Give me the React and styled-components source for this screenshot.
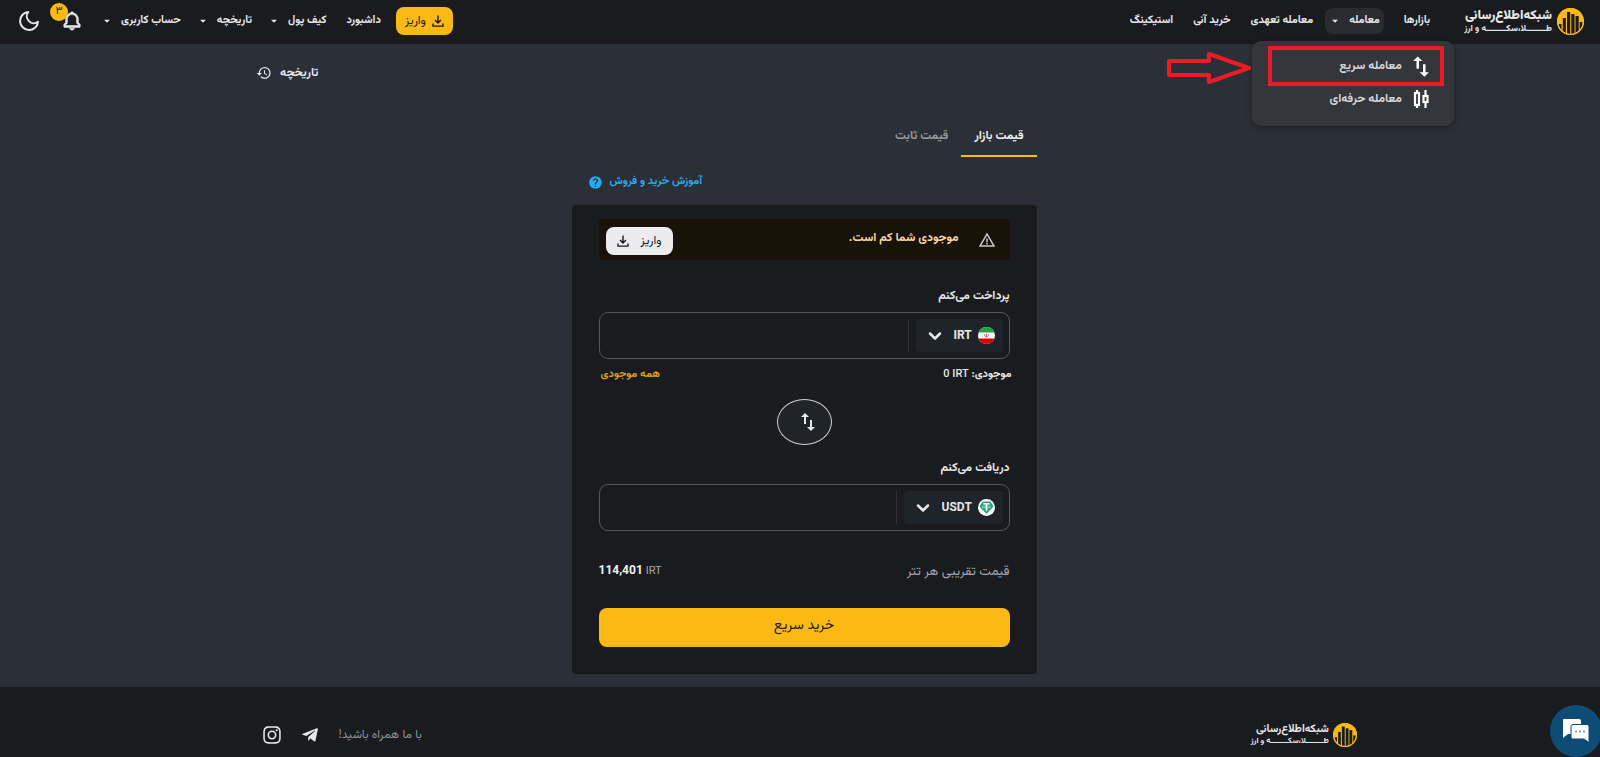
import React, {Component} from 'react';
import styled, {createGlobalStyle} from 'styled-components';
import {MdArrowDropDown, MdHelp, MdHistory, MdImportExport, MdWarningAmber} from 'react-icons/md';
import {BiBell} from 'react-icons/bi';
import {FiChevronDown, FiMoon} from 'react-icons/fi';
import {FaTelegramPlane, FaInstagram} from 'react-icons/fa';

const GlobalStyle = createGlobalStyle`
  * {
    box-sizing: border-box;
  }

  body {
    margin: 0;
    background-color: #2b2f37;
    color: #e6e7e9;
    font-family: Vazirmatn, Roboto, 'DejaVu Sans', sans-serif;
    font-size: 12px;
    line-height: 20px;
  }

  button, input, select {
    font: inherit;
    color: inherit;
    border: 0;
    margin: 0;
    padding: 0;
    background: none;
  }

  button {
    cursor: pointer;
  }

  a {
    color: inherit;
    text-decoration: none;
  }

  svg {
    display: block;
    flex-shrink: 0;
  }
`;

const Page = styled.div`
  min-height: 100vh;
  display: flex;
  flex-direction: column;
`;

const Header = styled.header`
  display: flex;
  justify-content: space-between;
  align-items: center;
  height: 44px;
  padding: 0 16px 2px 17px;
  background-color: #1a1b1f;
`;

const Nav = styled.nav`
  display: flex;
  align-items: center;
  gap: 20px;
  font-size: 11px;
  font-weight: 700;
`;

const Brand = styled.a`
  display: flex;
  align-items: center;
  gap: ${props => props.$small ? '4px' : '5px'};
  margin-left: ${props => props.$small ? '0' : '14px'};

  svg {
    width: ${props => props.$small ? '24px' : '27px'};
    height: ${props => props.$small ? '24px' : '27px'};
  }

  .names {
    display: flex;
    flex-direction: column;
    white-space: nowrap;
  }

  strong {
    font-size: ${props => props.$small ? '11px' : '13px'};
    line-height: ${props => props.$small ? '13px' : '16px'};
  }

  small {
    font-size: ${props => props.$small ? '8px' : '9px'};
    line-height: 11px;
    font-weight: 700;
  }
`;

const MenuWrapper = styled.div`
  position: relative;
  margin-left: -8px;
`;

const MenuButton = styled.button`
  display: flex;
  align-items: center;
  gap: 7px;
  height: 26px;
  padding: ${props => props.$active ? '0 4px 0 3px' : '0'};
  border-radius: 8px;
  background-color: ${props => props.$active ? '#292c31' : 'transparent'};
  white-space: nowrap;

  svg {
    margin-left: ${props => props.$active ? '0' : '-5px'};
  }
`;

const NavLink = styled.a`
  white-space: nowrap;
`;

const Dropdown = styled.ul`
  position: absolute;
  z-index: 2;
  top: 33px;
  right: -70px;
  width: 202px;
  margin: 0;
  padding: 5px 10px 14px 16px;
  list-style: none;
  border-radius: 9px;
  background-color: #35363b;
  box-shadow: 0 2px 6px rgba(0, 0, 0, .35);
  font-size: 12px;
`;

const DropdownItem = styled.li`
  border: 4px solid ${props => props.$marked ? '#ed1c24' : 'transparent'};

  a {
    display: flex;
    align-items: center;
    gap: 10px;
    height: ${props => props.$marked ? '32px' : '18px'};
    padding-right: 10px;
    color: #d6d7da;
  }
`;

const Pointer = styled.svg`
  position: absolute;
  z-index: 3;
  top: 43px;
  right: 132px;
  width: 86px;
  height: 34px;
`;

const HeaderTools = styled.div`
  display: flex;
  align-items: center;
  gap: 20px;

  ${Nav} {
    margin: 0 -5px 0 2px;
  }
`;

const DepositButton = styled.button`
  display: flex;
  justify-content: center;
  align-items: center;
  gap: ${props => props.$light ? '12px' : '6px'};
  height: 28px;
  width: ${props => props.$light ? '67px' : '57px'};
  border-radius: 8px;
  background-color: ${props => props.$light ? '#ececee' : '#fcb813'};
  color: #1a1b1f;
`;

const IconButton = styled.button`
  position: relative;
  display: flex;
`;

const Badge = styled.span`
  position: absolute;
  top: -7px;
  left: -11px;
  width: 18px;
  height: 18px;
  border-radius: 50%;
  background-color: #fcb813;
  color: #1a1b1f;
  font-size: 11px;
  font-weight: 400;
  line-height: 18px;
  text-align: center;
`;

const Main = styled.main`
  flex: 1;
  padding: 19px 15.5% 12px 16%;
`;

const HistoryLink = styled.a`
  display: flex;
  justify-content: flex-end;
  align-items: center;
  gap: 8px;
  font-weight: 700;
`;

const Exchange = styled.section`
  width: 100%;
  max-width: 465px;
  margin: 29px auto 0;
`;

const Tabs = styled.div`
  display: flex;
`;

const Tab = styled.button`
  height: 45px;
  padding: 4px 13px 0;
  border-bottom: 2px solid ${props => props.$active ? '#fcb813' : 'transparent'};
  color: ${props => props.$active ? '#f2f2f3' : '#96999f'};
  font-weight: 700;
`;

const HelpLink = styled.a`
  display: flex;
  justify-content: flex-end;
  align-items: center;
  gap: 7px;
  margin-top: 15px;
  padding-left: 16px;
  color: #29a9f0;
  font-size: 11px;
  font-weight: 700;
`;

const Card = styled.form`
  margin-top: 13px;
  padding: 14px 27px 27px;
  border-radius: 4px;
  background-color: #1a1b1f;
`;

const Alert = styled.div`
  display: flex;
  align-items: center;
  gap: 19px;
  height: 41px;
  padding: 0 14px 0 7px;
  border-radius: 4px;
  background-color: #191208;
  color: #f6d9a0;
  font-weight: 700;

  svg {
    color: #c9c9cc;
  }

  p {
    flex: 1;
    margin: 0;
    padding-bottom: 3px;
  }

  button {
    margin-top: 3px;
    color: #1a1b1f;
    font-weight: 400;
  }

  button svg {
    color: #1a1b1f;
  }
`;

const Label = styled.label`
  display: block;
  margin-top: ${props => props.$top};
  font-weight: 700;
`;

const AmountBox = styled.div`
  display: flex;
  align-items: center;
  height: 47px;
  margin-top: 6px;
  padding: 0 6px;
  border: 1px solid #55565b;
  border-radius: 9px;

  input {
    flex: 1;
    min-width: 0;
    height: 33px;
    padding: 0 12px;
    border-right: 1px solid #303136;
    outline: none;
  }
`;

const CoinPicker = styled.span`
  display: flex;
  align-items: center;
  gap: 5px;
  height: 33px;
  margin-left: 7px;
  padding: 0 8px 0 9px;
  border-radius: 4px;
  background-color: #1f242a;

  select {
    appearance: none;
    padding: 0;
    margin-left: 4px;
    outline: none;
    direction: ltr;
    font-weight: 700;
  }
`;

const BalanceRow = styled.div`
  display: flex;
  justify-content: space-between;
  margin: 6px -2px 0 2px;
  font-size: 11px;
  font-weight: 700;

  button {
    color: #dd9f14;
    font-weight: 700;
  }

  bdi {
    font-weight: 500;
  }
`;

const SwapButton = styled.button`
  display: flex;
  justify-content: center;
  align-items: center;
  width: 55px;
  height: 46px;
  margin: 14px auto 0;
  padding-left: 8px;
  border: 1px solid #d0d0d2;
  border-radius: 50%;
  background-color: #1f242a;
`;

const PriceRow = styled.div`
  display: flex;
  justify-content: space-between;
  align-items: center;
  margin-top: 30px;
  color: #a3a6b5;
  font-size: 13px;

  .price {
    direction: ltr;
    font-size: 11px;
  }

  strong {
    color: #f2f2f3;
    font-size: 12px;
  }
`;

const BuyButton = styled.button`
  width: 100%;
  height: 39px;
  margin-top: 26px;
  padding-bottom: 3px;
  border-radius: 8px;
  background-color: #fcb813;
  color: #1a1b1f;
  font-size: 14px;
`;

const Footer = styled.footer`
  display: flex;
  justify-content: space-between;
  align-items: center;
  height: 70px;
  padding: 25px 15.2% 0 16.4%;
  background-color: #1a1b1f;
`;

const Social = styled.div`
  display: flex;
  align-items: center;
  gap: 19px;
  color: #8f9196;

  a {
    color: #e6e7e9;
  }
`;

const ChatButton = styled.button`
  position: fixed;
  right: -2px;
  bottom: 0;
  display: flex;
  justify-content: center;
  align-items: center;
  width: 52px;
  height: 52px;
  border-radius: 50%;
  background-color: #0f4c75;
`;

const LogoMark = () => (
  <svg viewBox="0 0 27 27" aria-hidden="true">
    <defs>
      <clipPath id="coin">
        <circle cx="13.5" cy="13.5" r="12.4" />
      </clipPath>
    </defs>
    <circle cx="13.5" cy="13.5" r="13.5" fill="#fcb813" />
    <g clipPath="url(#coin)" fill="#1a1b1f">
      <rect x="1.5" y="16" width="3" height="11" />
      <rect x="5.8" y="10" width="3" height="17" />
      <rect x="10" y="4" width="3.2" height="23" />
      <rect x="14.3" y="6" width="3.2" height="21" />
      <rect x="18.5" y="8" width="3.2" height="19" />
      <rect x="22.7" y="14" width="3" height="13" />
    </g>
    <circle cx="13.5" cy="13.5" r="12.9" fill="none" stroke="#fcb813" strokeWidth="1.2" />
  </svg>
);

const DownloadIcon = () => (
  <svg width="12" height="12" viewBox="0 0 12 12" fill="none" stroke="currentColor" strokeWidth="1.4">
    <path d="M6 .5v7M3 5l3 3 3-3M1 8.5v2.6h10V8.5" />
  </svg>
);

const ArrowsIcon = () => (
  <svg width="18" height="21" viewBox="4 3 16 18" fill="#fff">
    <path d="M9 3L5 7h3v7h2.2V7h3L9 3zm7 14v-7h-2.2v7h-3l4.2 4 4-4h-3z" />
  </svg>
);

const CandlesIcon = () => (
  <svg width="18" height="18" viewBox="0 0 18 18" fill="none" stroke="#fff" strokeWidth="2.2">
    <path d="M5 0v3M5 15v3M13.5 0v6M13.5 12v6" />
    <rect x="3" y="3" width="4" height="12" />
    <rect x="11.5" y="6" width="4" height="6" />
  </svg>
);

const IranFlag = () => (
  <svg width="17" height="17" viewBox="0 0 17 17" aria-hidden="true">
    <defs>
      <clipPath id="flag">
        <circle cx="8.5" cy="8.5" r="8.5" />
      </clipPath>
    </defs>
    <g clipPath="url(#flag)">
      <rect width="17" height="17" fill="#fff" />
      <rect width="17" height="5.5" fill="#249f40" />
      <rect y="11.5" width="17" height="5.5" fill="#da0000" />
    </g>
    <path d="M7 7c-.8 1.2-.4 2.6 1.5 3.2C10.4 9.6 10.8 8.2 10 7M8.5 6.6v3.6" fill="none" stroke="#e0474c" strokeWidth=".8" />
  </svg>
);

const TetherIcon = () => (
  <svg width="17" height="17" viewBox="0 0 17 17" aria-hidden="true">
    <circle cx="8.5" cy="8.5" r="8.5" fill="#fff" />
    <path d="M4.5 2.5h8l3 5-7 7.500-7-7.500z" fill="#26a17b" />
    <path d="M5.3 4.8h6.400M8.5 4.800v7.200" stroke="#fff" strokeWidth="1.5" />
    <ellipse cx="8.5" cy="7.9" rx="4.3" ry="1" fill="none" stroke="#fff" strokeWidth=".5" />
  </svg>
);

const ChatIcon = () => (
  <svg width="28" height="26" viewBox="0 0 28 26" aria-hidden="true">
    <path d="M2 1h15a2 2 0 0 1 2 2v13H6l-5 4V2a1 1 0 0 1 1-1z" fill="#fff" />
    <path d="M11 6.500h14a2 2 0 0 1 2 2V24.500l-5-3.500H11a2 2 0 0 1-2-2V8.500a2 2 0 0 1 2-2z" fill="#fff" stroke="#0f4c75" />
    <g fill="#7fa3bd">
      <rect x="13" y="12.5" width="2" height="2" />
      <rect x="17" y="12.5" width="2" height="2" />
      <rect x="21" y="12.5" width="2" height="2" />
    </g>
  </svg>
);

const Logo = ({small}) => (
  <Brand href="#" $small={small}>
    <LogoMark />
    <span className='names'>
      <strong>شبکه‌اطلاع‌رسانی</strong>
      <small>طــــــــلا،سکــــــــه و ارز</small>
    </span>
  </Brand>
);

const NavMenu = ({title, active}) => (
  <MenuButton type="button" $active={active} aria-haspopup="true">
    {title}
    <MdArrowDropDown size={14} />
  </MenuButton>
);

export default class App extends Component {

  state = {
    pay: '',
    receive: '',
    tab: 'market',
  }

  handleChange = (e) => {
    this.setState({
      [e.target.name]: e.target.value,
    })
  }

  render(){
    const {pay, receive, tab} = this.state;

    return(
      <Page dir="rtl" lang="fa">
        <GlobalStyle />
        <Header>
          <Nav>
            <Logo />
            <NavLink href="#">بازارها</NavLink>
            <MenuWrapper>
              <NavMenu title="معامله" active />
              <Dropdown>
                <DropdownItem $marked>
                  <a href="#"><ArrowsIcon />معامله سریع</a>
                </DropdownItem>
                <DropdownItem>
                  <a href="#"><CandlesIcon />معامله حرفه‌ای</a>
                </DropdownItem>
              </Dropdown>
              <Pointer viewBox="0 0 86 34" fill="none" stroke="#ed1c24" strokeWidth="4" strokeLinejoin="round">
                <path d="M3 10h40V3l40 14-40 14v-7H3z" />
              </Pointer>
            </MenuWrapper>
            <NavLink href="#">معامله تعهدی</NavLink>
            <NavLink href="#">خرید آنی</NavLink>
            <NavLink href="#">استیکینگ</NavLink>
          </Nav>
          <HeaderTools>
            <DepositButton type="button"><DownloadIcon />واریز</DepositButton>
            <Nav>
              <NavLink href="#">داشبورد</NavLink>
              <NavMenu title="کیف پول" />
              <NavMenu title="تاریخچه" />
              <NavMenu title="حساب کاربری" />
            </Nav>
            <IconButton type="button" aria-label="اعلان‌ها">
              <BiBell size={22} stroke="currentColor" strokeWidth={0.6} />
              <Badge>۳</Badge>
            </IconButton>
            <IconButton type="button" aria-label="حالت شب">
              <FiMoon size={24} />
            </IconButton>
          </HeaderTools>
        </Header>

        <Main>
          <HistoryLink href="#">تاریخچه <MdHistory size={16} /></HistoryLink>
          <Exchange>
            <Tabs>
              <Tab type="button" $active={tab === 'market'} onClick={() => this.setState({tab: 'market'})}>قیمت بازار</Tab>
              <Tab type="button" $active={tab === 'fixed'} onClick={() => this.setState({tab: 'fixed'})}>قیمت ثابت</Tab>
            </Tabs>
            <HelpLink href="#">آموزش خرید و فروش <MdHelp size={15} /></HelpLink>
            <Card>
              <Alert>
                <MdWarningAmber size={18} />
                <p>موجودی شما کم است.</p>
                <DepositButton type="button" $light>واریز <DownloadIcon /></DepositButton>
              </Alert>

              <Label htmlFor="pay" $top="26px">پرداخت می‌کنم</Label>
              <AmountBox>
                <CoinPicker>
                  <IranFlag />
                  <select aria-label="ارز پرداخت">
                    <option>IRT</option>
                  </select>
                  <FiChevronDown size={20} strokeWidth={3} />
                </CoinPicker>
                <input id="pay" name="pay" value={pay} onChange={this.handleChange} />
              </AmountBox>
              <BalanceRow>
                <span>موجودی: <bdi>0 IRT</bdi></span>
                <button type="button">همه موجودی</button>
              </BalanceRow>

              <SwapButton type="button" aria-label="جابجایی">
                <MdImportExport size={24} />
              </SwapButton>

              <Label htmlFor="receive" $top="13px">دریافت می‌کنم</Label>
              <AmountBox>
                <CoinPicker>
                  <TetherIcon />
                  <select aria-label="ارز دریافت">
                    <option>USDT</option>
                  </select>
                  <FiChevronDown size={20} strokeWidth={3} />
                </CoinPicker>
                <input id="receive" name="receive" value={receive} onChange={this.handleChange} />
              </AmountBox>

              <PriceRow>
                <span>قیمت تقریبی هر تتر</span>
                <span className='price'><strong>114,401</strong> IRT</span>
              </PriceRow>
              <BuyButton type="button">خرید سریع</BuyButton>
            </Card>
          </Exchange>
        </Main>

        <Footer>
          <Logo small />
          <Social>
            <span>با ما همراه باشید!</span>
            <a href="#" aria-label="تلگرام"><FaTelegramPlane size={18} /></a>
            <a href="#" aria-label="اینستاگرام"><FaInstagram size={20} /></a>
          </Social>
        </Footer>
        <ChatButton type="button" aria-label="گفتگو">
          <ChatIcon />
        </ChatButton>
      </Page>
    )
  }
}
